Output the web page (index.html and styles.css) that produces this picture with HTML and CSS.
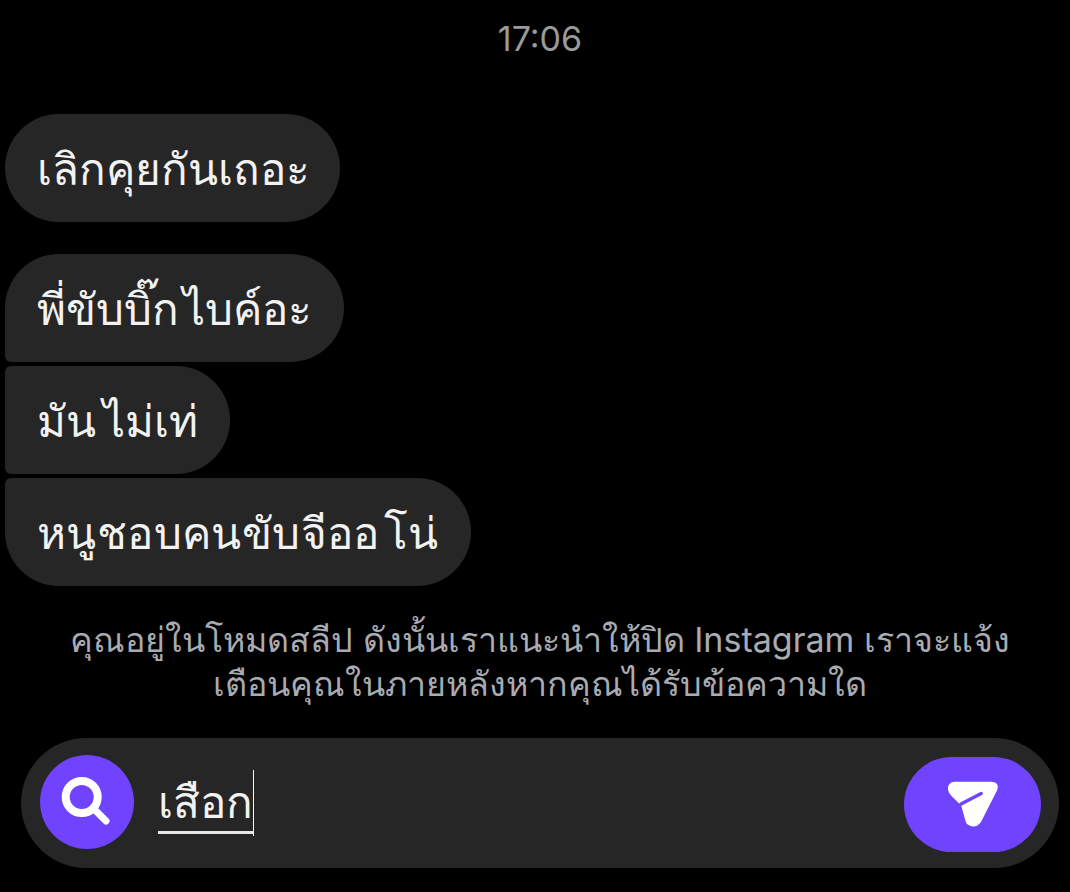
FILE: index.html
```html
<!DOCTYPE html>
<html lang="th">
<head>
<meta charset="utf-8">
<title>Instagram chat</title>
<link rel="stylesheet" href="styles.css">
</head>
<body>

<div class="time">17:06</div>

<div class="thread">
  <div class="bubble single">เลิกคุยกันเถอะ</div>
  <div class="group">
    <div class="bubble first">พี่ขับบิ๊ก<span class="gap-s">ไบค์อะ</span></div>
    <div class="bubble mid">มัน<span class="gap-m">ไม่เท่</span></div>
    <div class="bubble last">หนูชอบคนขับจีออ<span class="gap-s">โน่</span></div>
  </div>
</div>

<p class="notice">คุณอยู่ในโหมดสลีป ดังนั้นเราแนะนำให้ปิด Instagram เราจะแจ้ง<br>เตือนคุณในภายหลังหากคุณได้รับข้อความใด</p>

<div class="composer">
  <div class="search-btn">
    <svg width="54" height="54" viewBox="0 0 54 54" fill="none" stroke="#fff" stroke-linecap="round">
      <circle cx="21.700" cy="22" r="16" stroke-width="8"/>
      <path d="M36 36 L46 46" stroke-width="7"/>
    </svg>
  </div>
  <div class="input"><span class="typed">เสือก</span><span class="caret"></span></div>
  <div class="send-btn">
    <svg width="50" height="47" viewBox="0 0 50 47">
      <path fill="#fff" d="M6.500 0.800 H43.500 Q52 1.500 49 9.500 L33 41 Q27 49 19 43 Q18 42 17.500 40 L13.200 24.500 L3 14.500 Q-2.500 8 1.500 3 Q3.500 0.800 6.500 0.800 Z"/>
      <path d="M13 23 L33.200 12.500" stroke="#7043ff" stroke-width="3.500" stroke-linecap="round"/>
    </svg>
  </div>
</div>

</body>
</html>
```

FILE: styles.css
```css
html, body { margin: 0; padding: 0; }
body {
  width: 1070px;
  height: 892px;
  overflow: hidden;
  background-color: #000000;
  color: #f2f2f2;
  font-family: Inter, "Noto Sans", "DejaVu Sans", sans-serif;
}

.time {
  height: 114px;
  padding: 17px 0 0 10px;
  box-sizing: border-box;
  text-align: center;
  font-size: 34px;
  line-height: 44px;
  color: #9a9a9a;
}

.thread { padding-left: 5px; }
.group { display: flex; flex-direction: column; gap: 4px; margin-top: 32px; align-items: flex-start; }

.bubble {
  display: block;
  width: fit-content;
  height: 108px;
  line-height: 110px;
  padding: 0 32px;
  font-size: 44px;
  background-color: #262626;
  border-radius: 54px;
  white-space: nowrap;
}
.bubble.single { padding-right: 30px; }
.bubble.first { border-bottom-left-radius: 6px; }
.bubble.mid { border-top-left-radius: 6px; border-bottom-left-radius: 6px; }
.bubble.last { border-top-left-radius: 6px; letter-spacing: 0.4px; }
.gap-s { margin-left: 4px; }
.gap-m { margin-left: 7px; }

.notice {
  margin: 32px 0 0;
  padding-left: 10px;
  height: 120px;
  text-align: center;
  font-size: 34px;
  line-height: 44px;
  color: #a9abb3;
}

.composer {
  display: flex;
  align-items: center;
  box-sizing: border-box;
  width: 1038px;
  height: 130px;
  margin-left: 21px;
  padding: 0 18px 0 19px;
  background-color: #262626;
  border-radius: 65px;
}
.search-btn {
  display: flex;
  align-items: center;
  justify-content: center;
  flex: none;
  width: 94px;
  height: 94px;
  margin-bottom: 2px;
  border-radius: 50%;
  background-color: #7043ff;
}
.input {
  display: flex;
  align-items: center;
  flex: 1;
  padding-left: 24px;
  font-size: 44px;
}
.typed { border-bottom: 3px solid #e6e6e6; line-height: 58px; }
.caret { width: 1px; height: 66px; background-color: #f5f5f5; }
.send-btn {
  display: flex;
  align-items: center;
  justify-content: center;
  flex: none;
  width: 137px;
  height: 95px;
  margin-top: 3px;
  border-radius: 48px;
  background-color: #7043ff;
}
```
